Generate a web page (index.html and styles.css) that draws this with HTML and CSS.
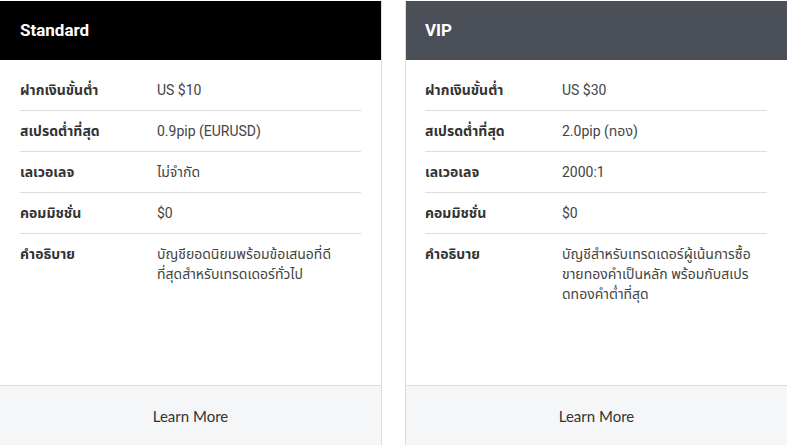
FILE: index.html
```html
<!DOCTYPE html>
<html lang="th">
<head>
<meta charset="utf-8">
<link rel="stylesheet" href="styles.css">
</head>
<body>
<div class="cards">
  <div class="card">
    <div class="card-head head-black">Standard</div>
    <div class="card-body">
      <div class="row"><div class="label">ฝากเงินขั้นต่ำ</div><div class="value">US $10</div></div>
      <div class="row"><div class="label">สเปรดต่ำที่สุด</div><div class="value">0.9pip (EURUSD)</div></div>
      <div class="row"><div class="label">เลเวอเลจ</div><div class="value">ไม่จำกัด</div></div>
      <div class="row"><div class="label">คอมมิชชั่น</div><div class="value">$0</div></div>
      <div class="row last"><div class="label">คำอธิบาย</div><div class="value">บัญชียอดนิยมพร้อมข้อเสนอที่ดี<br>ที่สุดสำหรับเทรดเดอร์ทั่วไป</div></div>
    </div>
    <div class="card-foot">Learn More</div>
  </div>
  <div class="card card-right">
    <div class="card-head head-gray">VIP</div>
    <div class="card-body">
      <div class="row"><div class="label">ฝากเงินขั้นต่ำ</div><div class="value">US $30</div></div>
      <div class="row"><div class="label">สเปรดต่ำที่สุด</div><div class="value">2.0pip (ทอง)</div></div>
      <div class="row"><div class="label">เลเวอเลจ</div><div class="value">2000:1</div></div>
      <div class="row"><div class="label">คอมมิชชั่น</div><div class="value">$0</div></div>
      <div class="row last"><div class="label">คำอธิบาย</div><div class="value">บัญชีสำหรับเทรดเดอร์ผู้เน้นการซื้อ<br>ขายทองคำเป็นหลัก พร้อมกับสเปร<br>ดทองคำต่ำที่สุด</div></div>
    </div>
    <div class="card-foot">Learn More</div>
  </div>
</div>
</body>
</html>
```
FILE: styles.css
```css
html, body {
  margin: 0;
  padding: 0;
  background: #ffffff;
}
body {
  font-family: Roboto, "Noto Sans Thai", "Noto Sans", sans-serif;
  color: #333333;
  width: 787px;
  height: 445px;
  overflow: hidden;
}
.cards {
  display: flex;
  gap: 23px;
  padding-top: 1px;
}
.card {
  width: 382px;
  flex: 0 0 382px;
  height: 444px;
  box-sizing: border-box;
  border-right: 1px solid #dcdde0;
  display: flex;
  flex-direction: column;
}
.card-right {
  border-right: none;
  border-left: 1px solid #dcdde0;
}
.card-head {
  height: 59px;
  box-sizing: border-box;
  padding-left: 20px;
  padding-bottom: 1px;
  display: flex;
  align-items: center;
  color: #ffffff;
  font-weight: 700;
  font-size: 17px;
}
.card-right .card-head { padding-left: 19px; }
.head-black { background: #000000; }
.head-gray { background: #4a4f58; }
.card-body {
  flex: 1;
  padding: 10px 20px 0 20px;
}
.card-right .card-body { padding-left: 19px; }
.row {
  display: flex;
  padding: 10px 0;
  line-height: 20px;
  font-size: 14px;
  border-bottom: 1px solid #dddddd;
}
.row.last { border-bottom: none; }
.label {
  width: 137px;
  flex: 0 0 137px;
  font-weight: 700;
  color: #333333;
}
.value {
  flex: 1;
  color: #444444;
  white-space: nowrap;
}
.card-foot {
  height: 60px;
  box-sizing: border-box;
  border-top: 1px solid #dcdde0;
  background: #f5f6f7;
  display: flex;
  align-items: center;
  justify-content: center;
  font-family: Lato, "Open Sans", sans-serif;
  font-size: 15px;
  color: #333333;
}
```
